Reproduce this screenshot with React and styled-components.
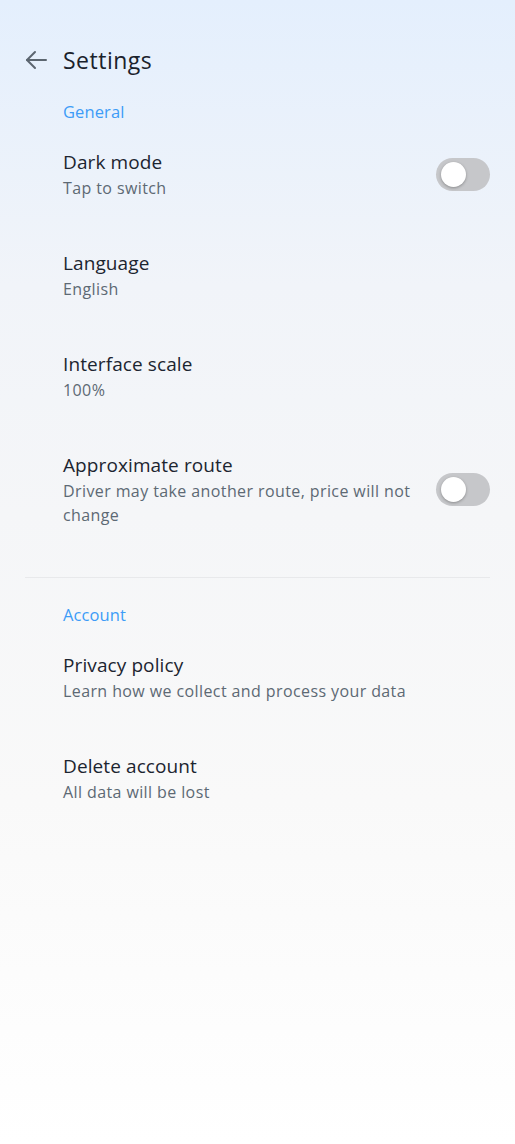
import React from 'react';
import styled, { createGlobalStyle } from 'styled-components';

const GlobalStyle = createGlobalStyle`
  html, body {
    margin: 0;
    padding: 0;
  }
  body {
    font-family: 'Open Sans', 'Liberation Sans', sans-serif;
  }
`;

const Page = styled.div`
  min-height: 1144px;
  box-sizing: border-box;
  padding: 40px 25px 0 25px;
  background: linear-gradient(180deg, #e4effd 0%, #f1f4f9 25%, #f5f6f8 45%, #f9f9f9 70%, #ffffff 100%);
`;

const Header = styled.div`
  display: flex;
  align-items: center;
  height: 40px;
  gap: 15px;
`;

const BackButton = styled.button`
  width: 23px;
  height: 24px;
  padding: 0;
  border: 0;
  background: none;
  display: flex;
  align-items: center;
  justify-content: center;
  color: #5c6670;
`;

const Title = styled.h1`
  margin: 0;
  font-size: 23px;
  letter-spacing: 0.5px;
  font-weight: 400;
  color: #1a222c;
`;

const Section = styled.div`
  padding-left: 38px;
  margin-top: ${(p) => p.$top || 0}px;
`;

const SectionLabel = styled.div`
  font-size: 16.5px;
  letter-spacing: 0.1px;
  line-height: 24px;
  color: #3d9cf7;
`;

const Item = styled.div`
  display: flex;
  align-items: center;
  justify-content: space-between;
  gap: 24px;
  padding: 25px 0;
`;

const ItemText = styled.div`
  display: flex;
  flex-direction: column;
`;

const ItemTitle = styled.div`
  font-size: 19px;
  letter-spacing: 0.1px;
  line-height: 27px;
  color: #1c2530;
`;

const ItemSub = styled.div`
  font-size: 16px;
  letter-spacing: 0.4px;
  line-height: 24px;
  color: #5d6974;
`;

const Toggle = styled.div`
  position: relative;
  flex-shrink: 0;
  width: 54px;
  height: 33px;
  border-radius: 17px;
  background: #c6c7ca;
`;

const Knob = styled.div`
  position: absolute;
  top: 4px;
  left: 5px;
  width: 25px;
  height: 25px;
  border-radius: 50%;
  background: #ffffff;
  box-shadow: 0 1px 3px rgba(0, 0, 0, 0.3);
`;

const Divider = styled.hr`
  margin: 25px 0 25px 0;
  border: 0;
  border-top: 1px solid #e8e9eb;
`;

const SettingItem = ({ title, sub, toggle }) => (
  <Item>
    <ItemText>
      <ItemTitle>{title}</ItemTitle>
      <ItemSub>{sub}</ItemSub>
    </ItemText>
    {toggle && (
      <Toggle>
        <Knob />
      </Toggle>
    )}
  </Item>
);

export default function App() {
  return (
    <Page>
      <GlobalStyle />
      <Header>
        <BackButton>
          <svg width="23" height="20" viewBox="0 0 23 20" fill="none" stroke="currentColor" strokeWidth="2" strokeLinecap="round" strokeLinejoin="round">
            <path d="M21 10H2" />
            <path d="M10 2L2 10l8 8" />
          </svg>
        </BackButton>
        <Title>Settings</Title>
      </Header>
      <Section $top={20}>
        <SectionLabel>General</SectionLabel>
        <SettingItem title="Dark mode" sub="Tap to switch" toggle />
        <SettingItem title="Language" sub="English" />
        <SettingItem title="Interface scale" sub="100%" />
        <SettingItem title="Approximate route" sub="Driver may take another route, price will not change" toggle />
      </Section>
      <Divider />
      <Section>
        <SectionLabel>Account</SectionLabel>
        <SettingItem title="Privacy policy" sub="Learn how we collect and process your data" />
        <SettingItem title="Delete account" sub="All data will be lost" />
      </Section>
    </Page>
  );
}
